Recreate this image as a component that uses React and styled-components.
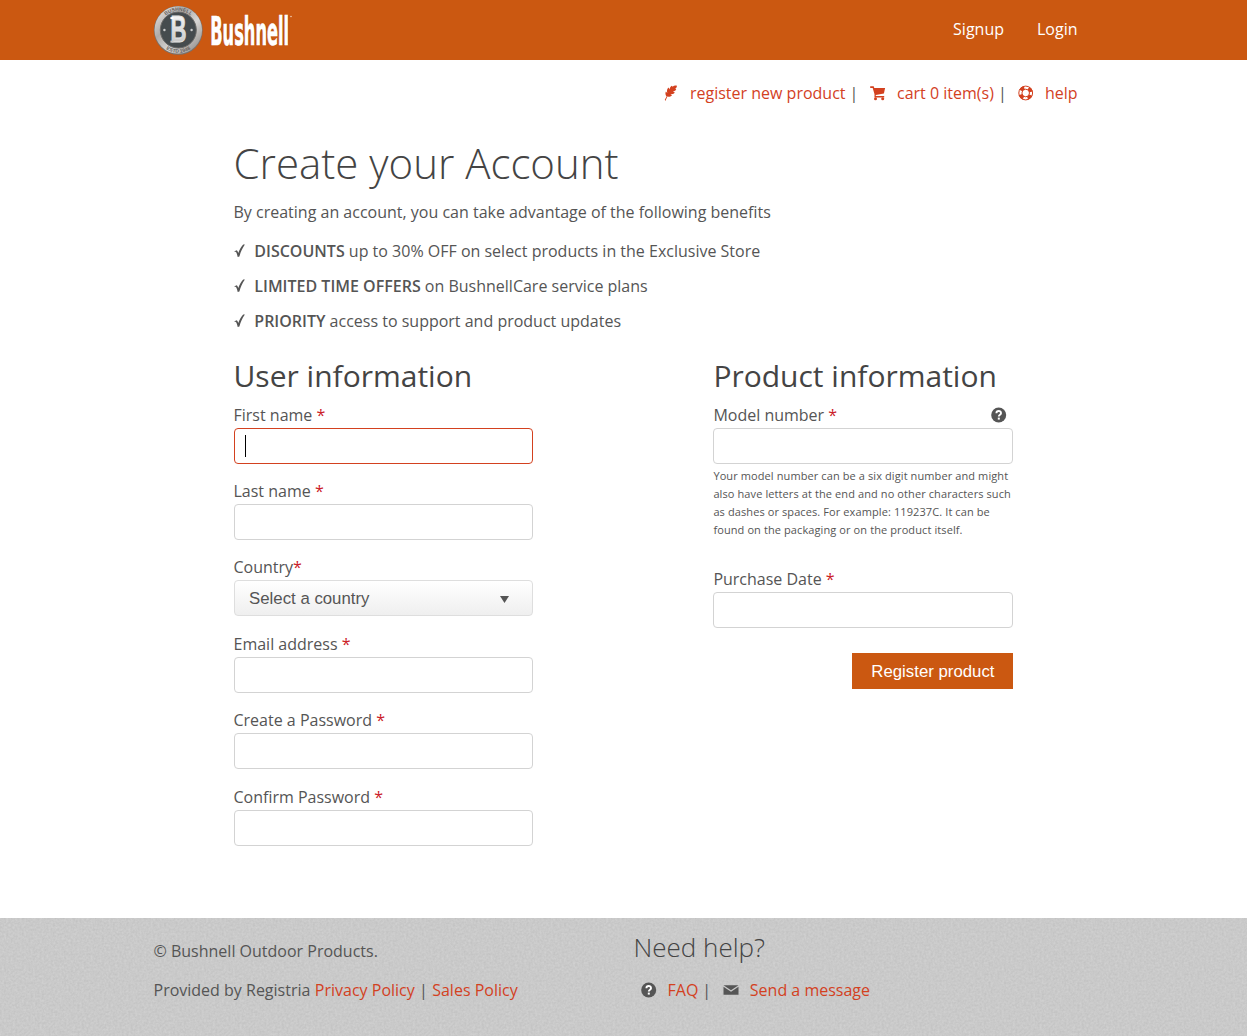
import React from "react";
import styled, { createGlobalStyle } from "styled-components";

const SANS = `"Open Sans", "Noto Sans", sans-serif`;
const ARIAL = `"Liberation Sans", Arial, sans-serif`;
const ORANGE = "#cb5811";
const RED = "#d3411f";
const GREY = "#555555";

const noise = `url("data:image/svg+xml,${encodeURIComponent(
  `<svg xmlns='http://www.w3.org/2000/svg' width='200' height='200'><filter id='n' x='0' y='0' width='100%' height='100%' color-interpolation-filters='sRGB'><feTurbulence type='fractalNoise' baseFrequency='0.45' numOctaves='2' seed='4' stitchTiles='stitch'/><feColorMatrix type='matrix' values='0.08 0 0 0 0.75  0.08 0 0 0 0.75  0.08 0 0 0 0.75  0 0 0 0 1'/></filter><rect width='200' height='200' filter='url(#n)'/></svg>`
)}")`;

const GlobalStyle = createGlobalStyle`
  * { box-sizing: border-box; }
  body {
    margin: 0;
    background: #fff;
    color: ${GREY};
    font: 400 16px/24px ${SANS};
  }
  h1, h2, h3, p, ul { margin: 0; padding: 0; }
`;

const Page = styled.div`
  min-height: 1036px;
  display: flex;
  flex-direction: column;
`;

const Header = styled.header`
  height: 60px;
  background: ${ORANGE};
`;

const Container = styled.div`
  width: 940px;
  height: 100%;
  margin: 0 auto;
  padding-right: 16px;
  display: flex;
  justify-content: space-between;
`;

const Logo = styled.svg`
  display: block;
  width: 150px;
  height: 60px;
  overflow: visible;
`;

const AccountNav = styled.nav`
  display: flex;
  gap: 33px;
  padding-top: 17px;
`;

const NavLink = styled.a`
  color: #fff;
`;

const Link = styled.a`
  color: ${RED};
  white-space: nowrap;
  margin-left: ${(p) => p.$gap || 0}px;
`;

const Divider = styled.span`
  margin-left: ${(p) => p.$before}px;
  margin-right: ${(p) => p.$after}px;
  width: 5px;
  text-align: center;
`;

const Toolbar = styled.div`
  width: 940px;
  height: 45px;
  margin: 0 auto;
  padding: 21px 16px 0 0;
  display: flex;
  justify-content: flex-end;
  align-items: center;
`;

const Icon = styled.svg`
  display: block;
  flex: none;
  width: ${(p) => p.$w || 16}px;
  height: ${(p) => p.$h || 16}px;
  margin-top: ${(p) => p.$drop || 0}px;
  fill: ${(p) => p.$color || GREY};
`;

const Main = styled.main`
  width: 780px;
  margin: 0 auto;
  padding-top: 29px;
  height: 813px;
`;

const Title = styled.h1`
  color: #444;
  font-weight: 300;
  font-size: 42px;
  line-height: 58px;
  height: 60px;
`;

const Intro = styled.p`
  padding-top: 6px;
`;

const Benefits = styled.ul`
  list-style: none;
  margin-top: 10px;
`;

const Benefit = styled.li`
  height: 35px;
  line-height: 35px;
  display: flex;
  align-items: center;
  white-space: pre;
`;

const Check = styled.svg`
  width: 12px;
  height: 14px;
  margin: -1px 8.8px 0 0;
  fill: ${GREY};
`;

const Strong = styled.strong`
  font-weight: 600;
`;

const Columns = styled.div`
  display: flex;
  gap: 180.9px;
  margin-top: 15px;
`;

const Column = styled.section`
  flex: none;
  width: ${(p) => p.$width}px;
`;

const SectionTitle = styled.h2`
  color: #444;
  font-weight: 400;
  font-size: 30px;
  line-height: 44px;
  height: 48px;
  white-space: nowrap;
`;

const Field = styled.div`
  height: ${(p) => p.$height || 76.4}px;
`;

const Label = styled.label`
  display: flex;
  height: 25.6px;
  line-height: 25.7px;
  align-items: flex-start;
  white-space: pre;
  padding: 0.6px 6.4px 0 0;
`;

const Required = styled.span`
  color: #cb2027;
  flex: 1;
`;

const TextBox = styled.div`
  height: 36px;
  border: 1px solid ${(p) => (p.$focused ? RED : "#d3d3d3")};
  border-radius: 4px;
  background: #fff;
  padding: 6px 10.5px;
`;

const Caret = styled.div`
  width: 1px;
  height: 22px;
  background: #000;
`;

const SelectBox = styled.div`
  height: 36px;
  display: flex;
  justify-content: space-between;
  align-items: center;
  border: 1px solid #dedede;
  border-radius: 4px;
  background: linear-gradient(#fff, #efefef);
  padding: 1px 23px 0 14.6px;
  font: 16.8px/35px ${ARIAL};
`;

const Hint = styled.p`
  padding-top: 3px;
  font-size: 11px;
  line-height: 18px;
  letter-spacing: 0.1px;
  white-space: nowrap;
`;

const Button = styled.button`
  display: block;
  width: 161px;
  height: 36px;
  margin: -3px 0 0 auto;
  padding: 2px 0 0;
  border: 0;
  background: ${ORANGE};
  color: #fff;
  font: 16.8px/34px ${ARIAL};
`;

const Footer = styled.footer`
  height: 118px;
  background: #c9c9c9 ${noise};
`;

const FooterRow = styled.div`
  width: 940px;
  margin: 0 auto;
  display: flex;
`;

const FooterColumn = styled.div`
  width: 480px;
  flex: none;
`;

const FooterTitle = styled.h3`
  color: #444;
  font-weight: 300;
  font-size: 26px;
  line-height: 36px;
  padding-top: 11px;
  height: 60px;
`;

const Line = styled.p`
  display: flex;
  align-items: center;
  white-space: pre;
  padding-top: ${(p) => p.$top || 0}px;
  padding-left: ${(p) => p.$left || 0}px;
`;

function HelpIcon({ drop }) {
  return (
    <Icon viewBox="0 0 16 16" $drop={drop}>
      <circle cx="7.7" cy="8" r="7.5" />
      <path d="M5.4 6.3C5.4 3.3 10.1 3.3 10 6.2C10 7.8 7.8 7.6 7.8 9.5" fill="none" stroke="#fff" strokeWidth="1.9" />
      <rect x="6.8" y="10.6" width="2" height="2" fill="#fff" />
    </Icon>
  );
}

function BrandLogo() {
  return (
    <Logo viewBox="0 0 150 60">
      <defs>
        <linearGradient id="metal" x1="0" y1="0" x2="1" y2="1">
          <stop offset="0" stopColor="#eeeceb" />
          <stop offset=".35" stopColor="#aeaba9" />
          <stop offset=".6" stopColor="#d8d6d4" />
          <stop offset="1" stopColor="#827e7b" />
        </linearGradient>
        <linearGradient id="letters" x1="0" y1="0" x2="0" y2="1">
          <stop offset="0" stopColor="#fff" />
          <stop offset="1" stopColor="#bdbdbd" />
        </linearGradient>
        <path id="topArc" d="M5.2 30A19.1 19.1 0 0 1 43.4 30" />
        <path id="bottomArc" d="M1.6 30A22.7 22.7 0 0 0 47 30" />
      </defs>
      <circle cx="24.3" cy="30.4" r="24.4" fill="#77716d" />
      <circle cx="24.3" cy="30" r="23.8" fill="url(#metal)" />
      <circle cx="24.3" cy="30" r="18" fill="#454b4e" stroke="#6c6a68" />
      <g fontFamily="Liberation Sans, sans-serif" fontWeight="700" fontSize="5" fill="#68625e">
        <text><textPath href="#topArc" startOffset="50%" textAnchor="middle">BUSHNELL</textPath></text>
        <text><textPath href="#bottomArc" startOffset="50%" textAnchor="middle">ESTD 1948</textPath></text>
      </g>
      <circle cx="10.4" cy="30" r="1.2" fill="#ccc" />
      <circle cx="37.6" cy="30" r="1.2" fill="#ccc" />
      <g fill="url(#letters)">
        <text x="16.6" y="42.2" textLength="16" lengthAdjust="spacingAndGlyphs" fontFamily="Liberation Sans, sans-serif" fontWeight="700" fontSize="36" stroke="#e3e3e3" strokeWidth=".9">B</text>
        <rect x="16.4" y="17.1" width="3" height="2" fill="#fff" />
        <rect x="16.4" y="40.6" width="3" height="2" fill="#c4c4c4" />
      </g>
      <g fontFamily="DejaVu Sans, sans-serif" fontWeight="700" fontSize="38.6">
        <text x="57.2" y="45.4" textLength="79" lengthAdjust="spacingAndGlyphs" fill="#8a3a0a" opacity=".5">Bushnell</text>
        <text x="56.2" y="44.6" textLength="79" lengthAdjust="spacingAndGlyphs" fill="#fff" stroke="#fff" strokeWidth=".7">Bushnell</text>
      </g>
      <circle cx="137" cy="16.5" r=".8" fill="#f2cdb5" />
    </Logo>
  );
}

function InputField({ label, focused }) {
  return (
    <Field>
      <Label>{label} <Required>*</Required></Label>
      <TextBox $focused={focused}>{focused && <Caret />}</TextBox>
    </Field>
  );
}

const benefits = [
  ["DISCOUNTS", " up to 30% OFF on select products in the Exclusive Store"],
  ["LIMITED TIME OFFERS", " on BushnellCare service plans"],
  ["PRIORITY", " access to support and product updates"],
];

export default function App() {
  return (
    <Page>
      <GlobalStyle />
      <Header>
        <Container>
          <BrandLogo />
          <AccountNav>
            <NavLink>Signup</NavLink>
            <NavLink>Login</NavLink>
          </AccountNav>
        </Container>
      </Header>
      <Toolbar>
        <Icon $color={RED} viewBox="0 0 16 16">
          <path d="M1.3 15.9L.8 14.8L2.6 11.4C1.3 10.2 1.1 8 1.9 6.6L3.3 7.9C2.6 5.9 3.1 3.8 4.6 2.6L5.6 4.6C5.7 2.6 6.6 1.3 8 .7L8.6 1.7C9.8.6 11.4.3 12.9.8C12.9 2.1 12.3 3.2 11.2 3.7L12.2 4.5C11.6 5.7 10.3 6.4 8.8 6.3L10.8 7.4C9.9 8.9 8.1 9.5 6.3 8.9L8 10.4C6.6 11.6 4.9 11.9 3.4 11.6Z" />
        </Icon>
        <Link $gap={10}>register new product</Link>
        <Divider $before={4} $after={15.5}>|</Divider>
        <Icon $color={RED} viewBox="0 0 16 16">
          <path d="M.2 1.3H3.7L4.3 3H15.1L13.9 8.6L5.8 10V11H14.2V12.5H4.5V9.3L2.7 3H.2Z" />
          <circle cx="5.5" cy="13.8" r="1.5" /><circle cx="12.7" cy="13.8" r="1.5" />
        </Icon>
        <Link $gap={11}>cart 0 item(s)</Link>
        <Divider $before={4} $after={15}>|</Divider>
        <Icon $color={RED} viewBox="0 0 16 16">
          <circle cx="7.7" cy="8" r="6.9" fill="none" stroke={RED} strokeWidth="1" />
          <circle cx="7.7" cy="8" r="5.5" fill="none" stroke={RED} strokeWidth="3.6" strokeDasharray="4.32 4.32" strokeDashoffset="-2.16" />
          <circle cx="7.7" cy="8" r="3.8" fill="none" stroke={RED} strokeWidth="1" />
        </Icon>
        <Link $gap={11}>help</Link>
      </Toolbar>
      <Main>
        <Title>Create your Account</Title>
        <Intro>By creating an account, you can take advantage of the following benefits</Intro>
        <Benefits>
          {benefits.map(([lead, rest]) => (
            <Benefit key={lead}>
              <Check viewBox="0 0 12 14">
                <path d="M.6 7.2L2.6 6.2C3.6 6.7 4 7.9 4.3 9.1C5.5 5.4 7.2 2.7 9.2 .6H10.9C8.3 4.2 6.6 8.1 5.4 12.6L3.7 13C3.2 10.8 2.5 8.2 1.7 7.7L.6 8Z" />
              </Check>
              <Strong>{lead}</Strong>{rest}
            </Benefit>
          ))}
        </Benefits>
        <Columns>
          <Column $width={299}>
            <SectionTitle>User information</SectionTitle>
            <InputField label="First name" focused />
            <InputField label="Last name" />
            <Field>
              <Label>Country<Required>*</Required></Label>
              <SelectBox>
                Select a country
                <Icon $w={9} $h={8} viewBox="0 0 9 8"><path d="M0 1H9L4.5 8Z" /></Icon>
              </SelectBox>
            </Field>
            <InputField label="Email address" />
            <InputField label="Create a Password" />
            <InputField label="Confirm Password" />
          </Column>
          <Column $width={300}>
            <SectionTitle>Product information</SectionTitle>
            <Field $height={164}>
              <Label>Model number <Required>*</Required><HelpIcon drop={4.6} /></Label>
              <TextBox />
              <Hint>
                Your model number can be a six digit number and might<br />
                also have letters at the end and no other characters such<br />
                as dashes or spaces. For example: 119237C. It can be<br />
                found on the packaging or on the product itself.
              </Hint>
            </Field>
            <Field $height={90}>
              <Label>Purchase Date <Required>*</Required></Label>
              <TextBox />
            </Field>
            <Button>Register product</Button>
          </Column>
        </Columns>
      </Main>
      <Footer>
        <FooterRow>
          <FooterColumn>
            <Line $top={21}>© Bushnell Outdoor Products.</Line>
            <Line $top={15}>
              Provided by Registria <Link $gap={0.3}>Privacy Policy</Link> | <Link $gap={0.3}>Sales Policy</Link>
            </Line>
          </FooterColumn>
          <FooterColumn>
            <FooterTitle>Need help?</FooterTitle>
            <Line $left={7}>
              <HelpIcon />
              <Link $gap={11}>FAQ</Link>
              <Divider $before={4} $after={15.5}>|</Divider>
              <Icon viewBox="0 0 16 16">
                <path d="M.5 3.3H15.5L8 8.3Z" /><path d="M.5 4.8L8 9.8L15.5 4.8V12.7H.5Z" />
              </Icon>
              <Link $gap={11}>Send a message</Link>
            </Line>
          </FooterColumn>
        </FooterRow>
      </Footer>
    </Page>
  );
}
